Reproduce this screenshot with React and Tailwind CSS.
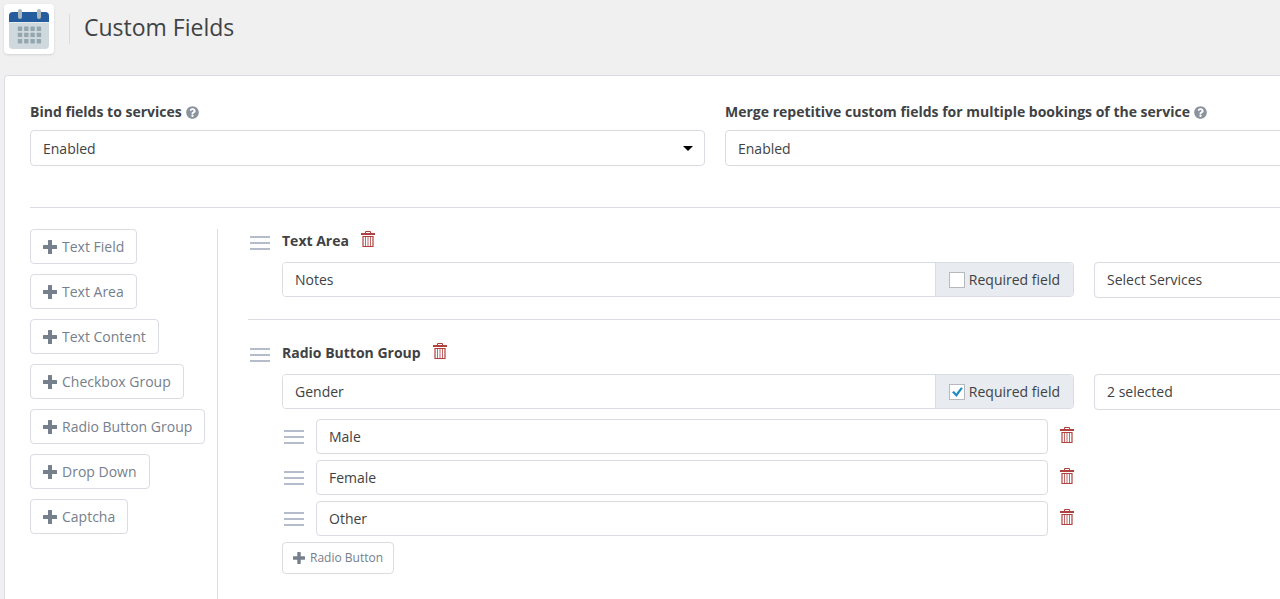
import { useState } from "react";
import { FaQuestionCircle } from "react-icons/fa";

const FIELD_TYPES = [
  "Text Field",
  "Text Area",
  "Text Content",
  "Checkbox Group",
  "Radio Button Group",
  "Drop Down",
  "Captcha"
];

function CalendarLogo() {
  return (
    <svg width="40" height="40" viewBox="0 0 40 40" aria-hidden="true">
      <rect x="0" y="3" width="40" height="37" rx="4" fill="#cfd8dd" />
      <path d="M0 13V7a4 4 0 0 1 4-4h32a4 4 0 0 1 4 4v6z" fill="#245c9e" />
      <rect x="0" y="13" width="40" height="1" fill="#e6ebee" />
      <rect x="9" y="0" width="4" height="10" rx="2" fill="#a9b8bf" />
      <rect x="28" y="0" width="4" height="10" rx="2" fill="#a9b8bf" />
      {[17.5, 23.7, 30].map((y) =>
        [8.8, 15.1, 21.4, 27.7].map((x) => (
          <rect key={`${x}-${y}`} x={x} y={y} width="4.4" height="4.4" rx="0.6" fill="#94a7af" />
        ))
      )}
    </svg>
  );
}

function PlusIcon({ size }) {
  return (
    <svg width={size} height={size} viewBox="0 0 14 14" fill="currentColor" aria-hidden="true">
      <path d="M5.5 0h3a.5.5 0 0 1 .5.5V5h4.5a.5.5 0 0 1 .5.5v3a.5.5 0 0 1-.5.5H9v4.5a.5.5 0 0 1-.5.5h-3a.5.5 0 0 1-.5-.5V9H.5a.5.5 0 0 1-.5-.5v-3A.5.5 0 0 1 .5 5H5V.5a.5.5 0 0 1 .5-.5z" />
    </svg>
  );
}

function TrashIcon() {
  return (
    <svg width="14" height="16" viewBox="0 0 14 16" fill="none" stroke="#b0413e" aria-hidden="true">
      <path d="M4.5 2V0.5h5V2" />
      <path d="M0 3h14" strokeWidth="2" />
      <path d="M2 5.5h10v10H2z" strokeWidth="1.2" />
      <path d="M4.5 6v9M7 6v9M9.5 6v9" strokeOpacity="0.8" />
    </svg>
  );
}

function DeleteButton({ label, onClick }) {
  return (
    <button type="button" aria-label={`Delete ${label}`} onClick={onClick} className="cursor-pointer pb-1">
      <TrashIcon />
    </button>
  );
}

function DragHandle() {
  return (
    <svg width="20" height="14" viewBox="0 0 20 14" className="shrink-0 cursor-move" aria-hidden="true">
      <path d="M0 1h20M0 7h20M0 13h20" stroke="#b5bccc" strokeWidth="2" />
    </svg>
  );
}

function SettingSelect({ id, label }) {
  return (
    <div className="flex-1">
      <div className="mb-2 flex h-5 items-center gap-1">
        <label htmlFor={id} className="font-bold">
          {label}
        </label>
        <FaQuestionCircle size={13} className="text-[#8b939e]" />
      </div>
      <div className="relative">
        <select
          id={id}
          defaultValue="Enabled"
          className="h-9 w-full appearance-none rounded border border-[#d9dce3] bg-white px-3 pt-0.5"
        >
          <option>Enabled</option>
          <option>Disabled</option>
        </select>
        <svg width="10" height="5" viewBox="0 0 10 5" className="pointer-events-none absolute top-4 right-3">
          <path d="M0 0h10L5 5z" fill="#000" />
        </svg>
      </div>
    </div>
  );
}

function Field({ title, name, required, services, children }) {
  const [checked, setChecked] = useState(required);

  return (
    <section className="flex gap-3 pl-0.5">
      <div className="pt-[7px]">
        <DragHandle />
      </div>
      <div className="flex-1">
        <div className="mb-[9px] flex h-6 items-center gap-3">
          <h2 className="font-bold">{title}</h2>
          <DeleteButton label={title} />
        </div>

        <div className="flex items-start gap-5">
          <div className="flex-1">
            <div className="flex h-[35px] overflow-hidden rounded border border-[#d9dce3]">
              <input
                type="text"
                aria-label={`${title} label`}
                defaultValue={name}
                className="min-w-0 flex-1 bg-white px-3"
              />
              <label className="flex items-center gap-1 border-l border-[#d9dce3] bg-[#e8ebf0] px-[13px]">
                <span className="relative">
                  <input
                    type="checkbox"
                    checked={checked}
                    onChange={(e) => setChecked(e.target.checked)}
                    className="peer block size-4 appearance-none border border-[#b4b9be] bg-white"
                  />
                  <svg
                    viewBox="0 0 16 16"
                    className="pointer-events-none absolute inset-0 hidden size-4 peer-checked:block"
                  >
                    <path d="M3 8.3l2-1.3 2.2 2.6L12 3.3l1.8 1L7.5 13z" fill="#1e8cbe" />
                  </svg>
                </span>
                Required field
              </label>
            </div>
            {children}
          </div>
          <button
            type="button"
            aria-haspopup="listbox"
            className="h-9 w-[306px] rounded border border-[#d9dce3] bg-white px-3 text-left"
          >
            {services}
          </button>
        </div>
      </div>
    </section>
  );
}

export default function App() {
  const [options, setOptions] = useState(["Male", "Female", "Other"]);

  const removeOption = (index) => {
    setOptions(options.filter((_, i) => i !== index));
  };

  return (
    <div className="min-h-screen overflow-hidden bg-[#f0f0f0] font-['Open_Sans',sans-serif] text-sm text-[#404244]">
      <div className="flex min-h-screen min-w-[1426px] flex-col pl-1">

        {/* HEADER */}
        <header className="flex items-center pt-1">
          <div className="rounded bg-white p-[5px] shadow">
            <CalendarLogo />
          </div>
          <div className="ml-[15px] h-[30px] border-l border-[#dcdcde]" />
          <h1 className="ml-[14px] pb-1 text-[23px]">Custom Fields</h1>
        </header>

        {/* CARD */}
        <main className="mt-[21px] flex flex-1 flex-col rounded-t border border-b-0 border-[#d9dce3] bg-white px-[25px] pt-[26px]">
          <div className="flex gap-5 border-b border-[#d9dce3] pb-[41px]">
            <SettingSelect id="bind" label="Bind fields to services" />
            <SettingSelect
              id="merge"
              label="Merge repetitive custom fields for multiple bookings of the service"
            />
          </div>

          <div className="mt-[21px] flex flex-1">
            {/* Field types */}
            <div className="flex w-[188px] flex-col items-start gap-[10px] border-r border-[#d9dce3] text-[#76808d]">
              {FIELD_TYPES.map((type) => (
                <button
                  key={type}
                  type="button"
                  className="flex h-[35px] items-center gap-[5px] rounded border border-[#d9dce3] px-3"
                >
                  <PlusIcon size={14} />
                  {type}
                </button>
              ))}
            </div>

            {/* Fields */}
            <div className="ml-[30px] flex-1">
              <Field title="Text Area" name="Notes" required={false} services="Select Services" />

              <hr className="my-[21px] border-[#d9dce3]" />

              <Field title="Radio Button Group" name="Gender" required={true} services="2 selected">
                <ul className="mt-[10px] flex flex-col gap-[6px]">
                  {options.map((option, i) => (
                    <li key={option} className="flex items-center gap-3 pl-0.5">
                      <DragHandle />
                      <input
                        type="text"
                        aria-label={`Option ${i + 1}`}
                        defaultValue={option}
                        className="h-[35px] min-w-0 flex-1 rounded border border-[#d9dce3] bg-white px-3"
                      />
                      <DeleteButton label={option} onClick={() => removeOption(i)} />
                    </li>
                  ))}
                </ul>
                <button
                  type="button"
                  onClick={() => setOptions([...options, `Option ${options.length + 1}`])}
                  className="mt-[6px] flex h-8 items-center gap-[5px] rounded border border-[#d9dce3] px-[10px] text-xs text-[#76808d]"
                >
                  <PlusIcon size={12} />
                  Radio Button
                </button>
              </Field>
            </div>
          </div>
        </main>
      </div>
    </div>
  );
}
